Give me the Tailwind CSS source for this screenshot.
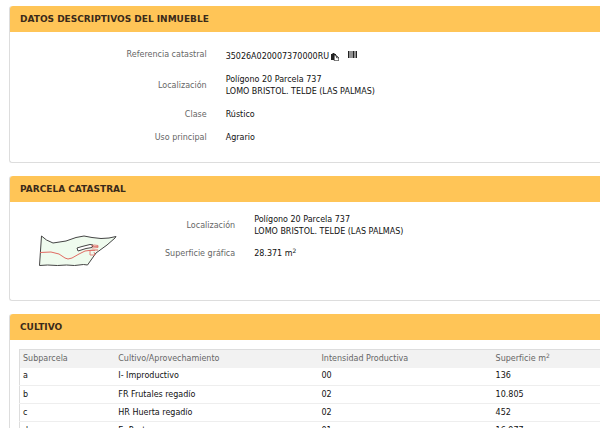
<!DOCTYPE html>
<html lang="es">
<head>
    <meta charset="UTF-8">
    <meta name="viewport" content="width=device-width, initial-scale=1.0">
    <title>Consulta catastral</title>
    <script src="https://cdn.jsdelivr.net/npm/@tailwindcss/browser@4"></script>
</head>
<body class="h-screen overflow-hidden bg-white pl-[9px] pt-[6px] font-['Verdana','DejaVu_Sans',sans-serif] text-[8px] leading-[12px] text-[#111]">
    <main class="flex flex-col gap-[13px]">
        <!-- Datos del inmueble -->
        <section class="rounded-l-[3px] border-b border-l border-[#ddd] pb-[18px]">
            <h2 class="rounded-tl-[3px] bg-[#ffc557] px-[10px] py-[7px] text-[9px] font-bold text-[#3a2a1a]">DATOS DESCRIPTIVOS DEL INMUEBLE</h2>
            <dl class="grid grid-cols-[1fr_2fr] items-center gap-y-[11px] pt-[17px]">
                <dt class="self-start text-right text-[#666]">Referencia catastral</dt>
                <dd class="flex items-center pl-[19px]">
                    <span class="pt-[2px]">35026A020007370000RU</span>
                    <button type="button" aria-label="Copiar" class="ml-[2px] pt-[1px]">
                        <svg class="h-[8px] w-[8px]" viewBox="0 0 16 16">
                            <path d="M0 2h3V0h4v2h3v3H6v9H0z" fill="#222"/>
                            <path d="M6.500 5.500h5l4 4v6h-9z" fill="#fff" stroke="#222" stroke-width="1.500"/>
                            <path d="M11 5.500v4h4.500" fill="none" stroke="#222" stroke-width="1.500"/>
                        </svg>
                    </button>
                    <button type="button" aria-label="Código de barras" class="ml-[9px] pb-[4px]">
                        <svg class="h-[7px] w-[9px]" viewBox="0 0 18 14">
                            <path d="M0 0h2v14H0zM3 0h1v14H3zM5 0h2v14H5zM8 0h1v14H8zM10 0h3v14h-3zM14 0h1v14h-1zM16 0h2v14h-2z" fill="#222"/>
                        </svg>
                    </button>
                </dd>
                <dt class="text-right text-[#666]">Localización</dt>
                <dd class="pl-[19px]">Polígono 20 Parcela 737<br>LOMO BRISTOL. TELDE (LAS PALMAS)</dd>
                <dt class="text-right text-[#666]">Clase</dt>
                <dd class="pl-[19px]">Rústico</dd>
                <dt class="text-right text-[#666]">Uso principal</dt>
                <dd class="pl-[19px]">Agrario</dd>
            </dl>
        </section>

        <!-- Parcela -->
        <section class="rounded-l-[3px] border-b border-l border-[#ddd]">
            <h2 class="rounded-tl-[3px] bg-[#ffc557] px-[10px] py-[7px] text-[9px] font-bold text-[#3a2a1a]">PARCELA CATASTRAL</h2>
            <div class="flex pb-[32px] pt-[12px]">
                <svg class="ml-[28px] mt-[20px] h-[34px] w-[80px] shrink-0" viewBox="0 0 80 34">
                    <path d="M3.500 2l5 4 6.500 3 13-2 10-3.500 8-1.500 8 1.500 9 1 8-.5 7-1.500-1 1.500-8 7-11 8-8.500 12-4-.5-9 1-8-.5-9 .5-10-.5-8 .5z" fill="#effbee" stroke="#444" stroke-width="1"/>
                    <path d="M2 18.500l11-.5 8 2 6 4 3 1 4-1 7-4 6-3 8-1h5" fill="none" stroke="#e06a62" stroke-width="1"/>
                    <path d="M39 14l5-1.500 8-2 3 .5-1 2.500-6 1-8 2.500z" fill="#fff" stroke="#444" stroke-width="1"/>
                    <path d="M53 12l3-1 4 .5v2l-6 .5M55 12.500h5M51 16.500h6M52 17v4h5l-1-3" fill="none" stroke="#e06a62" stroke-width=".8"/>
                </svg>
                <dl class="ml-[47px] grid flex-1 grid-cols-[max-content_1fr] content-start items-center gap-x-[19px] gap-y-[10px]">
                    <dt class="text-right text-[#666]">Localización</dt>
                    <dd>Polígono 20 Parcela 737<br>LOMO BRISTOL. TELDE (LAS PALMAS)</dd>
                    <dt class="text-right text-[#666]">Superficie gráfica</dt>
                    <dd>28.371 m<sup class="text-[6px]">2</sup></dd>
                </dl>
            </div>
        </section>

        <!-- Cultivo -->
        <section class="rounded-l-[3px] border-l border-[#ddd]">
            <h2 class="rounded-tl-[3px] bg-[#ffc557] px-[10px] py-[7px] text-[9px] font-bold text-[#3a2a1a]">CULTIVO</h2>
            <div class="pl-[9px] pt-[9px]">
                <table class="w-full table-fixed border-collapse border-l border-[#ddd] text-left">
                    <thead class="border-t border-[#ddd] bg-[#f2f2f2] text-[#666]">
                        <tr class="h-[18px]">
                            <th class="w-[16.5%] pl-[3px] font-normal">Subparcela</th>
                            <th class="w-[35%] pl-[3px] font-normal">Cultivo/Aprovechamiento</th>
                            <th class="w-[30%] pl-[3px] font-normal">Intensidad Productiva</th>
                            <th class="pl-[3px] font-normal">Superficie m<sup class="text-[6px]">2</sup></th>
                        </tr>
                    </thead>
                    <tbody>
                        <tr class="h-[18px] border-b border-[#eee]">
                            <td class="pl-[3px]">a</td>
                            <td class="pl-[3px]">I- Improductivo</td>
                            <td class="pl-[3px]">00</td>
                            <td class="pl-[3px]">136</td>
                        </tr>
                        <tr class="h-[18px] border-b border-[#eee]">
                            <td class="pl-[3px]">b</td>
                            <td class="pl-[3px]">FR Frutales regadío</td>
                            <td class="pl-[3px]">02</td>
                            <td class="pl-[3px]">10.805</td>
                        </tr>
                        <tr class="h-[18px] border-b border-[#eee]">
                            <td class="pl-[3px]">c</td>
                            <td class="pl-[3px]">HR Huerta regadío</td>
                            <td class="pl-[3px]">02</td>
                            <td class="pl-[3px]">452</td>
                        </tr>
                        <tr class="h-[18px] border-b border-[#eee]">
                            <td class="pl-[3px]">d</td>
                            <td class="pl-[3px]">E- Pastos</td>
                            <td class="pl-[3px]">01</td>
                            <td class="pl-[3px]">16.977</td>
                        </tr>
                    </tbody>
                </table>
            </div>
        </section>
    </main>
</body>
</html>
